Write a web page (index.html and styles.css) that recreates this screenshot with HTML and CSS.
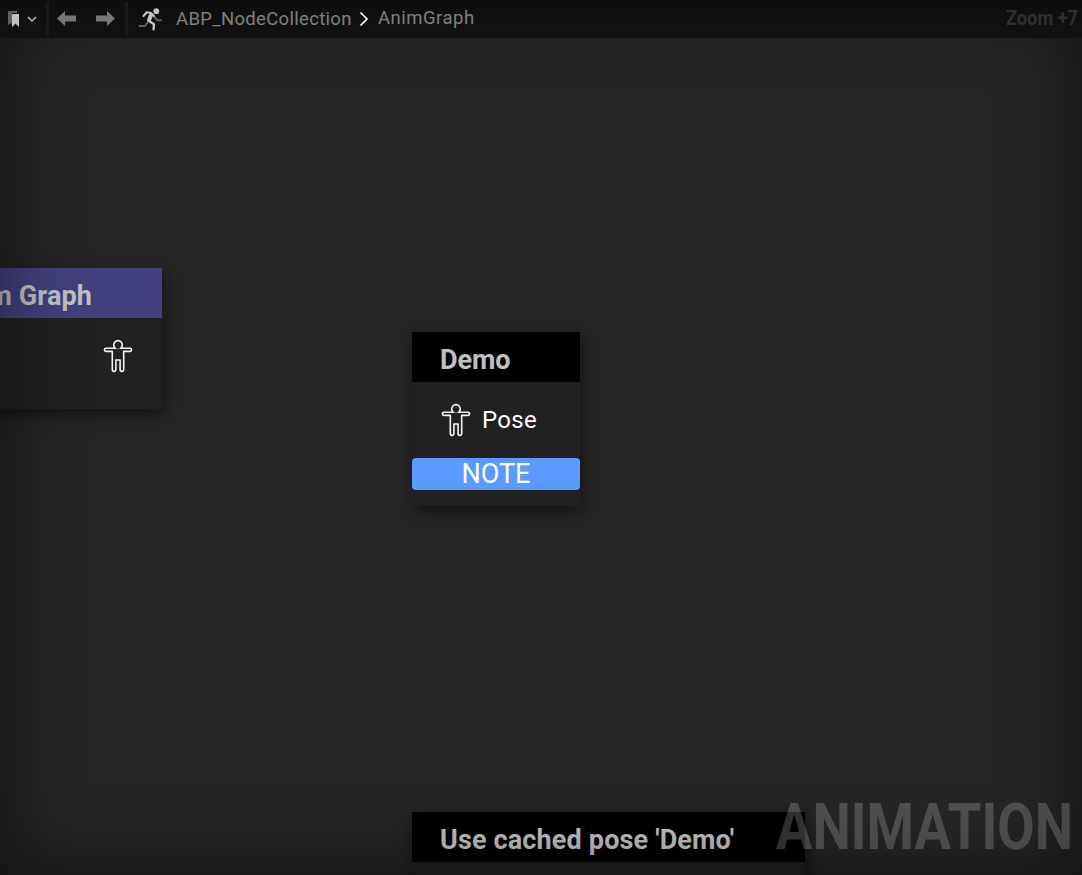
FILE: index.html
```html
<!DOCTYPE html>
<html lang="en">
<head>
<meta charset="utf-8">
<title>AnimGraph</title>
<link rel="stylesheet" href="styles.css">
</head>
<body>
<svg class="defs" width="0" height="0" aria-hidden="true">
  <symbol id="pose" viewBox="0 0 30 34">
    <path d="M12.2 9.200H3a1.500 1.500 0 0 0 0 3.200h6.300v18.200a1.800 1.800 0 0 0 3.600 0V21h4.200v9.600a1.800 1.800 0 0 0 3.600 0V12.4H27a1.500 1.500 0 0 0 0-3.200h-9.200a4.300 4.300 0 1 0-5.600 0z" fill="none" stroke="currentColor" stroke-width="1.600" stroke-linejoin="round"/>
    <path d="M12 9.700h6" stroke="currentColor" stroke-opacity=".45"/>
  </symbol>
</svg>
<div class="editor">
  <header class="bar">
    <div class="group bookmarks">
      <svg width="32" height="20" viewBox="0 0 32 20">
        <path d="M0 2h9v2H4v10l-4 2z" fill="#606060"/>
        <path d="M4 5h7v13l-3.500-3.500L4 18z" fill="#c0c0c0"/>
        <path d="M20 8l4 4 4-4" fill="none" stroke="#b8b8b8" stroke-width="1.500"/>
      </svg>
    </div>
    <div class="group history">
      <svg width="19" height="16" viewBox="0 0 19 16"><path d="M0 7.500L8 0v4.500h11v6H8V15z"/></svg>
      <svg width="19" height="16" viewBox="0 0 19 16"><path d="M19 7.500L11 0v4.500H0v6h11V15z"/></svg>
    </div>
    <div class="crumbs">
      <svg class="runner" width="24" height="24" viewBox="0 0 24 24" fill="none">
        <path d="M9.500 15.500L7 19H1.500M16.500 10l2.500 3.200h4" stroke="#606060" stroke-width="2" stroke-linecap="round" stroke-linejoin="round"/>
        <circle cx="18.300" cy="4.200" r="2.900" fill="#c4c4c4"/>
        <path d="M5.500 9l3.200-3.800 4.300.8 3 3" stroke="#c4c4c4" stroke-width="2.100" stroke-linecap="round" stroke-linejoin="round"/>
        <path d="M13.300 7.500L11 13" stroke="#c4c4c4" stroke-width="4" stroke-linecap="round"/>
        <path d="M11 14l5 3.300-.5 5" stroke="#c4c4c4" stroke-width="2.300" stroke-linecap="round" stroke-linejoin="round"/>
      </svg>
      <span class="crumb">ABP_NodeCollection</span>
      <svg class="sep" width="10" height="16" viewBox="0 0 10 16"><path d="M1.500 1.500L8 8l-6.500 6.500" fill="none" stroke="#fff" stroke-width="1.700"/></svg>
      <span class="crumb current">AnimGraph</span>
    </div>
    <svg class="zoom" width="80" height="38"><text x="4" y="25" textLength="72" lengthAdjust="spacingAndGlyphs">Zoom +7</text></svg>
  </header>
  <main class="canvas">
    <section class="node linked">
      <h2 class="title purple">Linked Anim Graph</h2>
      <div class="pin out"><svg class="pose" width="30" height="34"><use href="#pose"/></svg></div>
    </section>
    <section class="node demo">
      <h2 class="title">Demo</h2>
      <div class="pin"><svg class="pose" width="30" height="34"><use href="#pose"/></svg><span class="label">Pose</span></div>
      <div class="note">NOTE</div>
    </section>
    <section class="node cached">
      <h2 class="title">Use cached pose 'Demo'</h2>
    </section>
  </main>
  <div class="vignette"></div>
  <svg class="watermark" width="304" height="64"><text x="2" y="51" textLength="297" lengthAdjust="spacingAndGlyphs">ANIMATION</text></svg>
</div>
</body>
</html>
```
FILE: styles.css
```css
* { box-sizing: border-box; }
body { margin: 0; background: #262626; font-family: Roboto, "Liberation Sans", sans-serif; }
.defs { position: absolute; }
.editor { position: relative; display: flex; flex-direction: column; width: 1082px; height: 875px; overflow: hidden; background: #262626; }
.bar { position: relative; z-index: 1; display: flex; align-items: center; height: 38px; background: linear-gradient(#0e0e0e, #121212); flex: none; }
.group { display: flex; align-items: center; height: 34px; border-right: 3px solid #1a1a1a; }
.bookmarks { width: 49px; padding-left: 8px; }
.history { width: 79px; padding-left: 8px; gap: 20px; fill: #777; }
.crumbs { display: flex; align-items: center; padding-left: 10px; }
.crumb { font-size: 18.500px; line-height: 22px; letter-spacing: .32px; color: #808080; margin-left: 14px; width: 176px; white-space: nowrap; }
.sep { margin: 0 0 0 7px; }
.current { margin: -2px 0 0 9px; width: auto; letter-spacing: .5px; }
.zoom { margin-left: auto; font-size: 20.500px; font-weight: 700; fill: #303030; }
.canvas { position: relative; flex: 1; overflow: hidden; }
.node { position: absolute; background: #212121; box-shadow: 2px 5px 14px rgba(0, 0, 0, .5); }
.title { margin: 0; height: 50px; padding: 4px 28px 0; font-size: 27px; line-height: 48px; font-weight: 700; color: #c0c0c0; background: #000; white-space: nowrap; }
.purple { background: #42407d; }
.linked { left: -168px; top: 230px; width: 330px; height: 141px; }
.linked .title { padding-left: 28px; letter-spacing: .1px; }
.demo { left: 412px; top: 294px; width: 168px; height: 174px; }
.demo .title { letter-spacing: -.1px; }
.cached { left: 412px; top: 774px; width: 393px; height: 120px; }
.cached .title { letter-spacing: .15px; }
.pin { display: flex; align-items: center; height: 76px; padding: 0 29px; color: #f4f4f4; }
.out { justify-content: flex-end; }
.label { margin-left: 11px; font-size: 24px; letter-spacing: .3px; color: #fff; }
.note { height: 32px; border-radius: 4px; background: #5b9bff; color: #fff; font-size: 27px; line-height: 32px; text-align: center; }
.watermark { position: absolute; right: 4px; bottom: 13px; font-size: 64.500px; font-weight: 700; fill: rgba(255, 255, 255, .19); }
.vignette { position: absolute; inset: 0; box-shadow: inset 0 0 80px rgba(0, 0, 0, .55); pointer-events: none; }
```
